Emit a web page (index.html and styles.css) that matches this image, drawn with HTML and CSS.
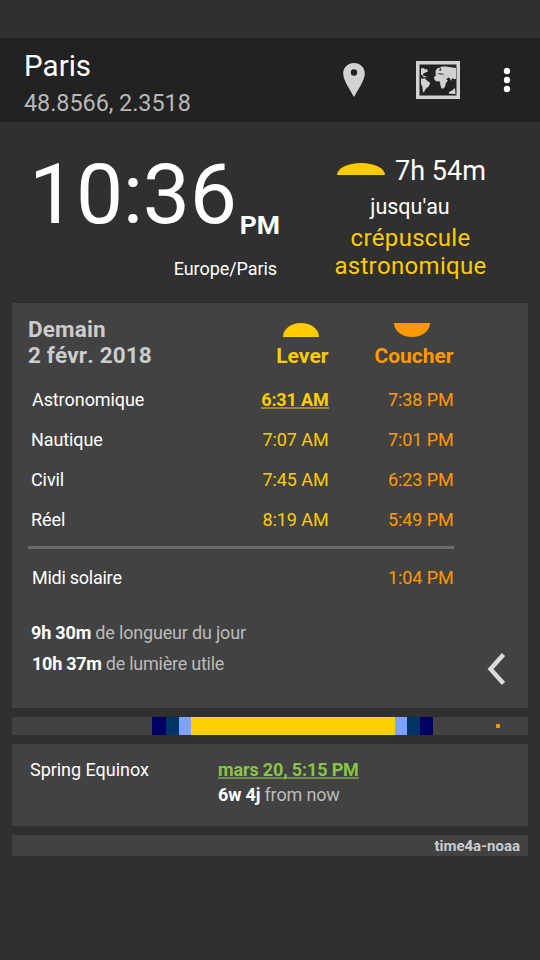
FILE: index.html
```html
<!DOCTYPE html>
<html lang="fr">
<head>
<meta charset="utf-8">
<title>Paris</title>
<link rel="stylesheet" href="styles.css">
</head>
<body>
<header class="bar">
  <div class="place">
    <div class="city">Paris</div>
    <div class="coords">48.8566, 2.3518</div>
  </div>
  <svg class="pin" width="22" height="35" viewBox="0 0 22 35"><path fill="#d2d2d2" fill-rule="evenodd" d="M11 0C5 0 .2 4.600 .2 10.500c0 7 7.400 17 10.800 23.500C14.400 27.500 21.800 17.500 21.800 10.500 21.800 4.600 17 0 11 0zM11 6.300a3.200 3.200 0 1 1 0 6.400 3.200 3.200 0 0 1 0-6.400z"/></svg>
  <svg class="map" width="44" height="38" viewBox="0 0 44 38">
    <path fill="#d2d2d2" fill-rule="evenodd" d="M0 0h44v38H0zM3.500 3.500v31h37v-31z"/>
    <path fill="#d2d2d2" d="M5 7.500l3-.5 1 1.500 2-.5 1 2.500-2.500 1-2 1-1 2-1.500-1zM6 14l4 1.500.5 1-3-.5zM5 17.500l4 0 2 2 3.200 2.500-1.500 3.500-2.200 1.500-1.500 2-1 2.500-1.200-1-.3-4.500-1.500-3zM19.500 10l1.500-2.500 2-.5 3-1.500 4 0 3 .5 7 1v11l-2 0-1.800-1-1 3-1.500-3-1.500-.5-2 2-1.500-3-4-.5-3-1-2 .5z"/>
    <path fill="#d2d2d2" d="M18.200 16l3-2.500 5 .5 3 1.500 1.500 3.500 1.300.5-2.300 3-.5 3-1.700 2-2 0-1.200-3.500-.3-3.500-4-.3-1.800-2.200zM32.500 31.500l3.500-2 3-2.500.500 6-6-.2z"/>
    <path fill="#222" d="M21 12.200l4.500.2 3.500 1-5 0zM24 7.500l1.500 0-1 2.500-1.200 0z"/>
  </svg>
  <svg class="more" width="8" height="26" viewBox="0 0 8 26"><g fill="#fff"><circle cx="4" cy="4" r="3.200"/><circle cx="4" cy="13" r="3.200"/><circle cx="4" cy="22" r="3.200"/></g></svg>
</header>

<section class="now">
  <div class="clock">
    <div class="clock-line"><span class="time">10:36</span><span class="ampm">PM</span></div>
    <div class="zone">Europe/Paris</div>
  </div>
  <div class="next">
    <div class="next-line">
      <svg width="48" height="12" viewBox="0 0 48 12"><path fill="#ffcc00" d="M0 12a24 12 0 0 1 48 0z"/></svg>
      <span>7h 54m</span>
    </div>
    <div class="until">jusqu'au</div>
    <div class="event">crépuscule<br>astronomique</div>
  </div>
</section>

<main class="cards">
  <section class="card day">
    <div class="table">
      <div class="head">
        <div class="date">Demain<br>2 févr. 2018</div>
        <div class="col rise"><svg width="36" height="14" viewBox="0 0 36 14"><path fill="#ffcc00" d="M0 14a18 14 0 0 1 36 0z"/></svg><span>Lever</span></div>
        <div class="col set"><svg width="36" height="14" viewBox="0 0 36 14"><path fill="#ff9900" d="M0 0a18 14 0 0 0 36 0z"/></svg><span>Coucher</span></div>
      </div>
      <div class="row"><span class="in1">Astronomique</span><span class="rise"><b class="mark">6:31 AM</b></span><span class="set">7:38 PM</span></div>
      <div class="row"><span>Nautique</span><span class="rise">7:07 AM</span><span class="set">7:01 PM</span></div>
      <div class="row"><span>Civil</span><span class="rise">7:45 AM</span><span class="set">6:23 PM</span></div>
      <div class="row"><span>Réel</span><span class="rise">8:19 AM</span><span class="set">5:49 PM</span></div>
      <div class="rule"></div>
      <div class="row noon"><span class="in1">Midi solaire</span><span></span><span class="set">1:04 PM</span></div>
    </div>
    <div class="foot">
      <div class="lengths">
        <p><b>9h 30m</b> de longueur du jour</p>
        <p class="in1"><b>10h 37m</b> de lumière utile</p>
      </div>
      <svg class="back" width="20" height="34" viewBox="0 0 20 34"><path fill="none" stroke="#dadada" stroke-width="4.400" d="M16.500 2.500L3.500 17l13 14.500"/></svg>
    </div>
  </section>

  <section class="lightmap">
    <i class="gap-left"></i><i class="astro first"></i><i class="naut"></i><i class="civil"></i><i class="sun"></i><i class="civil"></i><i class="naut"></i><i class="astro"></i><i class="dot"></i>
  </section>

  <section class="card season">
    <span class="name">Spring Equinox</span>
    <div>
      <p class="when"><b class="mark">mars 20, 5:15 PM</b></p>
      <p class="left"><b>6w 4j</b> from now</p>
    </div>
  </section>

  <section class="card source">time4a-noaa</section>
</main>
</body>
</html>
```
FILE: styles.css
```css
* { box-sizing: border-box; margin: 0; padding: 0; }
body { width: 540px; height: 960px; padding-top: 38px; overflow: hidden; background: #303030; color: #fff; font: 18px/20px Roboto, sans-serif; font-kerning: none; letter-spacing: -.1px; }
svg { display: block; flex: none; }
p, span { white-space: nowrap; }
b { font-weight: 700; }

.bar { display: flex; height: 84px; background: #222; letter-spacing: 0; }
.place { width: 343px; padding: 10px 0 0 24px; }
.city { font-size: 29.5px; line-height: 36px; }
.coords { margin-top: 5px; font-size: 23.4px; line-height: 28px; letter-spacing: -.04px; color: #b8b8b8; }
.pin { margin-top: 25px; }
.map { margin: 23px 0 0 51px; }
.more { margin: 29px 0 0 43px; }

.now { display: flex; height: 181px; }
.clock { width: 281px; padding-top: 23px; }
.clock-line { display: flex; justify-content: flex-end; height: 99px; }
.time { font-size: 84px; line-height: 100px; letter-spacing: -.3px; }
.ampm { margin: 64px 0 0 3px; font-size: 26.500px; line-height: 32px; font-weight: 700; letter-spacing: 0; }
.zone { margin: 15px 3px 0 0; text-align: right; }
.next { width: 261px; padding-top: 33px; text-align: center; letter-spacing: 0; }
.next-line { display: flex; justify-content: center; gap: 10px; padding-left: 3px; font-size: 27px; line-height: 32px; }
.next-line svg { margin-top: 8px; }
.until { margin-top: 7px; font-size: 21.500px; line-height: 26px; }
.event { margin-top: 4px; padding-left: 1px; font-size: 24px; line-height: 28px; letter-spacing: .3px; color: #fc0; }

.cards { display: flex; flex-direction: column; gap: 9px; padding: 0 12px; }
.card { background: #424242; }
.rise { color: #fc0; }
.set { color: #f90; }
.mark { text-decoration: none; border-bottom: 2px solid #a1872a; line-height: 20px; display: inline-block; height: 19px; }

.day { height: 405px; padding: 13px 16px 0; }
.table { width: 426px; }
.head { display: flex; height: 64px; }
.date { width: 237px; font-size: 22.500px; line-height: 26px; font-weight: 700; letter-spacing: .15px; color: #ccc; }
.col { display: flex; flex-direction: column; font-size: 21px; line-height: 24px; font-weight: 700; align-items: flex-end; padding-top: 7px; gap: 7px; letter-spacing: 0; }
.col.rise { width: 63.5px; }
.col.rise svg { margin-right: 9.5px; }
.col.set { width: 125px; }
.col.set svg { margin-right: 23.5px; }
.row { display: grid; grid-template-columns: 175px 122.5px 125px; height: 40px; padding: 10px 0 0 3px; }
.row .rise, .row .set { text-align: right; }
.row .mark { letter-spacing: -.16px; }
.in1 { padding-left: 1px; }
.noon > .in1 { letter-spacing: -.26px; }
.rule { height: 3px; margin-top: 6px; background: #6b6b6b; }
.noon { height: 59px; padding-top: 19px; }
.foot { display: flex; justify-content: space-between; padding: 15px 5px 0 3px; letter-spacing: -.18px; }
.foot p { height: 31px; color: #bbb; }
.foot .in1 { letter-spacing: -.26px; }
.foot b { color: #fff; }
.back { margin-top: 29px; }

.lightmap { display: flex; height: 18px; background: #424242; }
.gap-left { width: 140px; }
.astro { width: 13px; background: #000064; }
.first { width: 14px; }
.naut { width: 13px; background: #003366; }
.civil { width: 12px; background: #7da2ff; }
.sun { width: 204px; background: #ffd000; }
.dot { width: 4px; height: 4px; margin: 7px 0 0 63px; border-radius: 1px; background: #f90; }

.season { display: flex; height: 82px; padding: 16px 0 0 18px; }
.name { width: 188px; letter-spacing: -.05px; }
.when { height: 25px; letter-spacing: -.14px; }
.when .mark { color: #8bc34a; border-color: #6c8f46; }
.left { letter-spacing: -.18px; color: #bbb; }
.left b { color: #fff; }
.source { height: 21px; padding-right: 8px; text-align: right; font-size: 15px; line-height: 22px; font-weight: 700; letter-spacing: 0; color: #ccc; }
```
